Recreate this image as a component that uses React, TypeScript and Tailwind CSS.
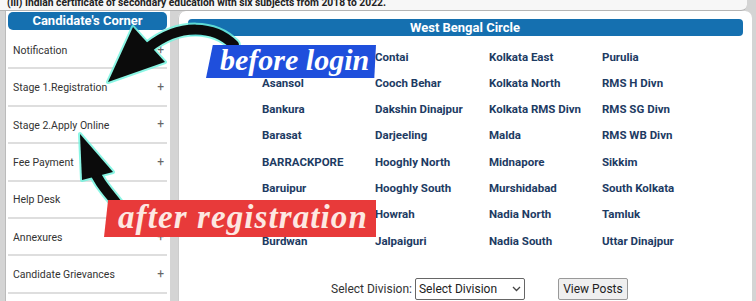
import React from "react";

const menu = [
  { t: "Notification", plus: true },
  { t: "Stage 1.Registration", plus: true },
  { t: "Stage 2.Apply Online", plus: true },
  { t: "Fee Payment", plus: true },
  { t: "Help Desk", plus: false },
  { t: "Annexures", plus: true },
  { t: "Candidate Grievances", plus: true },
];

const cols = [
  ["Alipurduar", "Asansol", "Bankura", "Barasat", "BARRACKPORE", "Baruipur", "Birbhum", "Burdwan"],
  ["Contai", "Cooch Behar", "Dakshin Dinajpur", "Darjeeling", "Hooghly North", "Hooghly South", "Howrah", "Jalpaiguri"],
  ["Kolkata East", "Kolkata North", "Kolkata RMS Divn", "Malda", "Midnapore", "Murshidabad", "Nadia North", "Nadia South"],
  ["Purulia", "RMS H Divn", "RMS SG Divn", "RMS WB Divn", "Sikkim", "South Kolkata", "Tamluk", "Uttar Dinajpur"],
];

export default function App() {
  const rows: string[] = [];
  for (let r = 0; r < 8; r++) for (let c = 0; c < 4; c++) rows.push(cols[c][r]);
  return (
    <div className="relative w-[756px] h-[301px] overflow-hidden bg-[#d4d4d4] font-['Roboto',sans-serif]">
      {/* top strip */}
      <div className="h-[11px] mr-[9px] bg-[#f7f7f7] border-b border-[#b5b5b5] rounded-br-[6px] overflow-hidden">
        <div className="-mt-[3px] pl-[7px] text-[10.3px] leading-[12px] font-bold text-[#222] whitespace-nowrap">
          (iii) Indian certificate of secondary education with six subjects from 2018 to 2022.
        </div>
      </div>

      <div className="flex h-[290px] pl-[5px] gap-[8px]">
        {/* left panel */}
        <div className="w-[165px] bg-white px-[3px] pt-[1px] shadow-[inset_1px_0_0_#bbb]">
          <div className="h-[18px] rounded-[5px] bg-[#1570b0] text-white text-[13px] font-bold leading-[18px] text-center">
            Candidate's Corner
          </div>
          <div className="mt-[2px] flex flex-col">
            {menu.map((m) => (
              <div
                key={m.t}
                className="h-[37.4px] flex items-center justify-between pl-[5px] pr-[3px] border-b-2 border-[#dedede] text-[10.5px] text-[#333]"
              >
                <span className="mt-[2px]">{m.t}</span>
                {m.plus && <span className="text-[12px] text-[#666]">+</span>}
              </div>
            ))}
          </div>
        </div>

        {/* right panel */}
        <div className="flex-1 mr-[4px] bg-white rounded-t-[7px] pt-[8px] pl-[10px] pr-[9px] shadow-[inset_1px_0_0_#ccc]">
          <div className="h-[17px] rounded-[4px] bg-[#1570b0] text-white text-[13px] font-bold leading-[17px] pl-[222px]">
            West Bengal Circle
          </div>
          <div className="mt-[8px] pl-[74px] grid grid-cols-[113px_114px_113px_1fr]">
            {rows.map((n, i) => (
              <div key={i} className="h-[26.3px] flex items-center text-[11.5px] font-bold text-[#1d3b63] whitespace-nowrap">
                {n}
              </div>
            ))}
          </div>
          <div className="mt-[24px] pl-[143px] flex items-center text-[12px] text-[#333]">
            <span className="mr-[3px]">Select Division:</span>
            <div className="w-[110px] h-[22px] border border-[#666] rounded-[2px] flex items-center justify-between px-[3px] text-[12px] text-[#222]">
              <span>Select Division</span>
              <svg width="9" height="6" viewBox="0 0 9 6"><path d="M1 1l3.5 3.5L8 1" stroke="#444" strokeWidth="1.3" fill="none" /></svg>
            </div>
            <div className="ml-[33px] w-[70px] h-[22px] border border-[#999] rounded-[2px] bg-[#efefef] flex items-center justify-center text-[12px] text-[#222]">
              View Posts
            </div>
          </div>
        </div>
      </div>

      {/* annotation arrows */}
      <svg className="absolute left-0 top-0 pointer-events-none" width="756" height="301" viewBox="0 0 756 301">
        <g stroke="#6ff5df" strokeWidth="14" fill="none" strokeLinecap="round" opacity="0.8">
          <path d="M234 45 C215 26 180 22 148 48" />
          <path d="M118 205 C108 192 98 182 92 166" />
        </g>
        <g fill="#6ff5df" stroke="#6ff5df" strokeWidth="4" strokeLinejoin="round" opacity="0.8">
          <polygon points="108,82 133,27 165,62" />
          <polygon points="80,134 82,180 113,172" />
        </g>
        <g stroke="#0b0b0b" strokeWidth="10" fill="none" strokeLinecap="round">
          <path d="M234 45 C215 26 180 22 148 48" />
          <path d="M118 205 C108 192 98 182 92 166" />
        </g>
        <g fill="#0b0b0b">
          <polygon points="108,82 133,27 165,62" />
          <polygon points="80,134 82,180 113,172" />
        </g>
      </svg>

      {/* before login label */}
      <div className="absolute left-[206px] top-[45px] w-[170px] h-[33px] bg-[#1f4fdc] [clip-path:polygon(4%_0,100%_0,99%_100%,0_100%)] flex items-center pl-[14px]">
        <span className="font-['Liberation_Serif',serif] italic font-bold text-[30px] leading-none text-white whitespace-nowrap -mt-[3px]">
          before login
        </span>
      </div>

      {/* after registration label */}
      <div className="absolute left-[104px] top-[200px] w-[272px] h-[37px] bg-[#e83a3a] [clip-path:polygon(1.5%_0,100%_0,100%_100%,0_100%)] flex items-center pl-[14px]">
        <span className="font-['Liberation_Serif',serif] italic font-bold text-[33px] tracking-[1.1px] leading-none text-[#fde8e2] whitespace-nowrap -mt-[3px]">
          after registration
        </span>
      </div>
    </div>
  );
}
